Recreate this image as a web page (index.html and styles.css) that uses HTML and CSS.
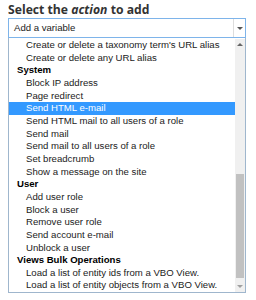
FILE: index.html
```html
<!DOCTYPE html>
<html lang="en">
<head>
	<meta charset="UTF-8">
	<title>Add action</title>
<link rel="stylesheet" href="styles.css">
</head>
<body>
	<div id="wrap">
		<label class="title">Select the <em>action</em> to add</label>
		<div class="select">
			<span class="value">Add a variable</span>
			<span class="btn"><i class="down"></i></span>
		</div>
		<div class="list">
			<ul class="opts">
				<li>Create or delete a taxonomy term's URL alias</li>
				<li>Create or delete any URL alias</li>
				<li class="group">System</li>
				<li>Block IP address</li>
				<li>Page redirect</li>
				<li class="on">Send HTML e-mail</li>
				<li>Send HTML mail to all users of a role</li>
				<li>Send mail</li>
				<li>Send mail to all users of a role</li>
				<li>Set breadcrumb</li>
				<li>Show a message on the site</li>
				<li class="group">User</li>
				<li>Add user role</li>
				<li>Block a user</li>
				<li>Remove user role</li>
				<li>Send account e-mail</li>
				<li>Unblock a user</li>
				<li class="group">Views Bulk Operations</li>
				<li>Load a list of entity ids from a VBO View.</li>
				<li>Load a list of entity objects from a VBO View.</li>
			</ul>
			<div class="bar">
				<span class="arr"><i class="up"></i></span>
				<span class="track"></span>
				<span class="thumb"></span>
				<span class="gap"></span>
				<span class="arr"><i class="dn"></i></span>
			</div>
		</div>
	</div>
</body>
</html>
```
FILE: styles.css
```css
body{
	margin: 2px 8px;
	background: #fff;
	font-family: "Liberation Sans", Arial, sans-serif;
}
#wrap{
	width: 238px;
}
.title{
	display: block;
	font-family: "Open Sans", sans-serif;
	font-weight: bold;
	font-size: 12.2px;
	line-height: 16px;
	color: #333;
}
.title em{
	font-style: italic;
}
.select{
	display: flex;
	height: 18px;
	border: 1px solid #7eb4ea;
	font-size: 9.6px;
	color: #222;
}
.value{
	flex: 1;
	padding-left: 5px;
	line-height: 18px;
}
.btn{
	width: 11px;
	border-left: 1px solid #ddd;
	display: flex;
	align-items: center;
	justify-content: center;
}
.down, .dn{
	width: 0;
	height: 0;
	border-left: 3px solid transparent;
	border-right: 3px solid transparent;
	border-top: 3px solid #555;
}
.list{
	display: flex;
	width: 236px;
	height: 253px;
	border: 1px solid #9fb6cd;
	border-top: 0;
	padding-top: 1px;
	overflow: hidden;
}
.opts{
	flex: 1;
	list-style: none;
	margin: 0;
	padding: 0;
	font-size: 9.6px;
	line-height: 12.65px;
	color: #222;
}
.opts li{
	padding-left: 17px;
	white-space: nowrap;
}
.opts .group{
	padding-left: 8px;
	font-weight: bold;
	color: #000;
}
.opts .on{
	background: #3399ff;
	color: #fff;
}
.bar{
	width: 10px;
	display: flex;
	flex-direction: column;
	background: #f0f0f0;
}
.arr{
	height: 11px;
	display: flex;
	align-items: center;
	justify-content: center;
}
.up{
	width: 0;
	height: 0;
	border-left: 3px solid transparent;
	border-right: 3px solid transparent;
	border-bottom: 3px solid #666;
}
.dn{
	border-top-color: #a0a0a0;
}
.track{
	height: 124px;
}
.thumb{
	height: 104px;
	margin: 0 1px;
	background: #c1c1c1;
}
.gap{
	flex: 1;
}
```
